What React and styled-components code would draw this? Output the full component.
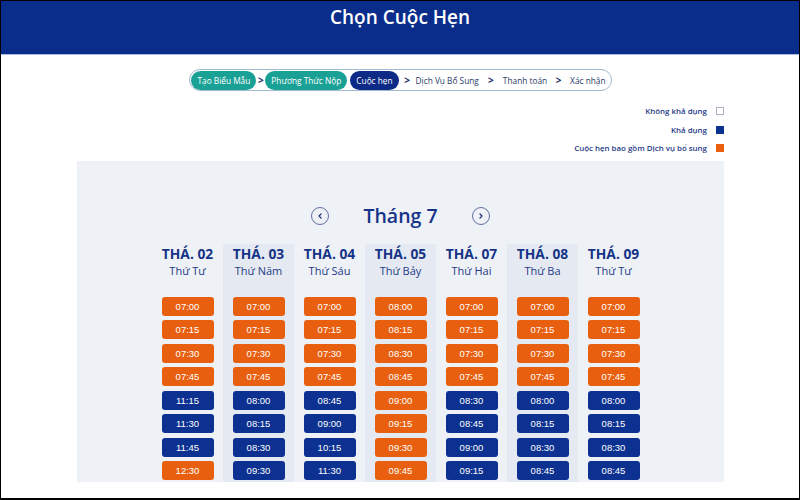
import React from "react"
import styled, { createGlobalStyle } from "styled-components"

const GlobalStyle = createGlobalStyle`
  html, body { margin: 0; padding: 0; background: #fff; }
  body { font-family: "Open Sans", "Noto Sans", sans-serif; }
  * { box-sizing: border-box; }
`

const ORANGE = "#e8600f"
const NAVY = "#0c3190"

const Frame = styled.div`
  width: 800px;
  height: 500px;
  border: 1px solid #000;
  border-bottom-width: 2px;
  overflow: hidden;
  display: flex;
  flex-direction: column;
`

const Header = styled.header`
  height: 54px;
  flex-shrink: 0;
  background: #0a2d8c;
  border-bottom: 1px solid #a9b9de;
  display: flex;
  justify-content: center;
  padding-top: 3px;
`

const Title = styled.h1`
  margin: 0;
  color: #fff;
  font-size: 19px;
  font-weight: 600;
  line-height: 26px;
`

const Main = styled.main`
  flex: 1;
  display: flex;
  flex-direction: column;
  padding: 0 75px 0 76px;
  min-height: 0;
`

const StepperRow = styled.div`
  display: flex;
  justify-content: center;
  margin-top: 14px;
`

const Stepper = styled.div`
  display: flex;
  align-items: center;
  height: 22px;
  padding: 0 5px 0 1px;
  border: 1px solid #9ebbd0;
  border-radius: 11px;
`

const Step = styled.span`
  height: 19px;
  display: flex;
  align-items: center;
  padding: 0 ${p => (p.$done || p.$active ? 6 : 0)}px;
  border-radius: 10px;
  font-size: 8.3px;
  white-space: nowrap;
  color: ${p => (p.$done || p.$active ? "#fff" : "#2b3b66")};
  background: ${p => (p.$done ? "#1aa196" : p.$active ? "#0d2a86" : "transparent")};
`

const Chevron = styled.span`
  width: ${p => p.$w || 12}px;
  display: flex;
  justify-content: center;
  color: #1b2a66;
  font-size: 10px;
  font-weight: 700;
`

const Legend = styled.div`
  display: flex;
  flex-direction: column;
  align-items: flex-end;
  margin-top: 14px;
  gap: 6px;
`

const LegendItem = styled.div`
  display: flex;
  align-items: center;
  gap: 9px;
  height: 12.5px;
  font-size: 7.9px;
  font-weight: 600;
  color: #1f3a86;
`

const Swatch = styled.span`
  width: 8px;
  height: 8px;
  background: ${p => p.$color};
  border: 1px solid ${p => (p.$color === "#fff" ? "#a8b0c0" : p.$color)};
`

const Panel = styled.section`
  margin-top: 6px;
  flex: 1;
  margin-bottom: 16px;
  background: #eef2f7;
  padding-top: 40px;
  overflow: hidden;
  display: flex;
  flex-direction: column;
  align-items: center;
`

const MonthRow = styled.div`
  display: flex;
  align-items: center;
  gap: 34px;
  height: 30px;
`

const MonthTitle = styled.h2`
  margin: 0;
  font-size: 19.5px;
  font-weight: 600;
  color: #163487;
  line-height: 30px;
`

const ArrowBtn = styled.button`
  width: 18px;
  height: 18px;
  padding: 0;
  border-radius: 50%;
  border: 1px solid #5e6f9f;
  background: transparent;
  display: flex;
  align-items: center;
  justify-content: center;
  color: #1d2f6a;
`

const Columns = styled.div`
  display: flex;
  margin-top: 13px;
  flex: 1;
`

const Column = styled.div`
  width: 71px;
  display: flex;
  flex-direction: column;
  align-items: center;
  padding-top: 1px;
  background: ${p => (p.$shaded ? "#e5eaf2" : "transparent")};
`

const DayNum = styled.div`
  font-size: 13.8px;
  font-weight: 700;
  color: #163487;
  line-height: 17px;
`

const DayName = styled.div`
  font-size: 11px;
  color: #1f3a86;
  line-height: 15px;
  margin-top: 1px;
`

const Slots = styled.div`
  display: flex;
  flex-direction: column;
  gap: 4.5px;
  margin-top: 19px;
`

const Slot = styled.div`
  width: 52px;
  height: 19px;
  border-radius: 3px;
  background: ${p => (p.$extra ? ORANGE : NAVY)};
  color: #fff;
  font-family: "Liberation Sans", "Open Sans", sans-serif;
  font-size: 9.5px;
  display: flex;
  align-items: center;
  justify-content: center;
`

const days = [
  { d: "02", n: "Thứ Tư", slots: ["07:00", "07:15", "07:30", "07:45", "11:15", "11:30", "11:45", "12:30"], o: [0, 1, 2, 3, 7] },
  { d: "03", n: "Thứ Năm", slots: ["07:00", "07:15", "07:30", "07:45", "08:00", "08:15", "08:30", "09:30"], o: [0, 1, 2, 3] },
  { d: "04", n: "Thứ Sáu", slots: ["07:00", "07:15", "07:30", "07:45", "08:45", "09:00", "10:15", "11:30"], o: [0, 1, 2, 3] },
  { d: "05", n: "Thứ Bảy", slots: ["08:00", "08:15", "08:30", "08:45", "09:00", "09:15", "09:30", "09:45"], o: [0, 1, 2, 3, 4, 5, 6, 7] },
  { d: "07", n: "Thứ Hai", slots: ["07:00", "07:15", "07:30", "07:45", "08:30", "08:45", "09:00", "09:15"], o: [0, 1, 2, 3] },
  { d: "08", n: "Thứ Ba", slots: ["07:00", "07:15", "07:30", "07:45", "08:00", "08:15", "08:30", "08:45"], o: [0, 1, 2, 3] },
  { d: "09", n: "Thứ Tư", slots: ["07:00", "07:15", "07:30", "07:45", "08:00", "08:15", "08:30", "08:45"], o: [0, 1, 2, 3] },
]

const Arrow = ({ dir }) => (
  <svg width="6" height="6" viewBox="0 0 6 6">
    <path
      d={dir === "left" ? "M4 1 L2 3 L4 5" : "M2 1 L4 3 L2 5"}
      fill="none"
      stroke="currentColor"
      strokeWidth="1.2"
      strokeLinecap="round"
      strokeLinejoin="round"
    />
  </svg>
)

const App = () => (
  <Frame>
    <GlobalStyle />
    <Header>
      <Title>Chọn Cuộc Hẹn</Title>
    </Header>
    <Main>
      <StepperRow>
        <Stepper>
          <Step $done>Tạo Biểu Mẫu</Step>
          <Chevron $w={9}>&gt;</Chevron>
          <Step $done>Phương Thức Nộp</Step>
          <Chevron $w={3} />
          <Step $active>Cuộc hẹn</Step>
          <Chevron $w={17}>&gt;</Chevron>
          <Step>Dịch Vụ Bổ Sung</Step>
          <Chevron $w={24}>&gt;</Chevron>
          <Step>Thanh toán</Step>
          <Chevron $w={23}>&gt;</Chevron>
          <Step>Xác nhận</Step>
        </Stepper>
      </StepperRow>
      <Legend>
        <LegendItem>Không khả dụng <Swatch $color="#fff" /></LegendItem>
        <LegendItem>Khả dụng <Swatch $color={NAVY} /></LegendItem>
        <LegendItem>Cuộc hẹn bao gồm Dịch vụ bổ sung <Swatch $color={ORANGE} /></LegendItem>
      </Legend>
      <Panel>
        <MonthRow>
          <ArrowBtn aria-label="Tháng trước"><Arrow dir="left" /></ArrowBtn>
          <MonthTitle>Tháng 7</MonthTitle>
          <ArrowBtn aria-label="Tháng sau"><Arrow dir="right" /></ArrowBtn>
        </MonthRow>
        <Columns>
          {days.map((day, i) => (
            <Column key={day.d} $shaded={i % 2 === 1}>
              <DayNum>THÁ. {day.d}</DayNum>
              <DayName>{day.n}</DayName>
              <Slots>
                {day.slots.map((t, j) => (
                  <Slot key={t} $extra={day.o.includes(j)}>{t}</Slot>
                ))}
              </Slots>
            </Column>
          ))}
        </Columns>
      </Panel>
    </Main>
  </Frame>
)

export default App
